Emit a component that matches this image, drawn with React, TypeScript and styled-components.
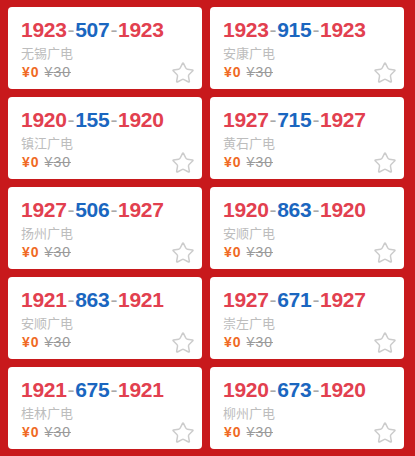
import { createGlobalStyle } from 'styled-components';
import styled from 'styled-components';
import { Star } from 'lucide-react';

export interface INumberData {
  id: string;
  prefix: string;
  middle: string;
  suffix: string;
  city: string;
  price: number;
  originalPrice: number;
}

const numbers: INumberData[] = [
  { id: 'a1', prefix: '1923', middle: '507', suffix: '1923', city: '无锡广电', price: 0, originalPrice: 30 },
  { id: 'a2', prefix: '1923', middle: '915', suffix: '1923', city: '安康广电', price: 0, originalPrice: 30 },
  { id: 'a3', prefix: '1920', middle: '155', suffix: '1920', city: '镇江广电', price: 0, originalPrice: 30 },
  { id: 'a4', prefix: '1927', middle: '715', suffix: '1927', city: '黄石广电', price: 0, originalPrice: 30 },
  { id: 'a5', prefix: '1927', middle: '506', suffix: '1927', city: '扬州广电', price: 0, originalPrice: 30 },
  { id: 'a6', prefix: '1920', middle: '863', suffix: '1920', city: '安顺广电', price: 0, originalPrice: 30 },
  { id: 'a7', prefix: '1921', middle: '863', suffix: '1921', city: '安顺广电', price: 0, originalPrice: 30 },
  { id: 'a8', prefix: '1927', middle: '671', suffix: '1927', city: '崇左广电', price: 0, originalPrice: 30 },
  { id: 'a9', prefix: '1921', middle: '675', suffix: '1921', city: '桂林广电', price: 0, originalPrice: 30 },
  { id: 'a10', prefix: '1920', middle: '673', suffix: '1920', city: '柳州广电', price: 0, originalPrice: 30 },
];

const GlobalStyle = createGlobalStyle`
  * {
    box-sizing: border-box;
  }
  html, body {
    margin: 0;
    padding: 0;
    background-color: #c8191c;
  }
  body {
    font-family: "Liberation Sans", "Noto Sans CJK SC", sans-serif;
  }
`

const NumberGrid = styled.ul`
  display: grid;
  grid-template-columns: 1fr 1fr;
  gap: 8px;
  margin: 0;
  padding: 7px 11px 7px 8px;
  min-height: 100vh;
  background-color: #c8191c;
`

const NumberCard = styled.li`
  display: flex;
  flex-direction: row;
  justify-content: space-between;
  height: 82px;
  padding: 10px 7px 4px 13px;
  list-style: none;
  background-color: #fff;
  border-radius: 4px;
`

const NumberInfo = styled.div`
  display: flex;
  flex-direction: column;
`

const PhoneNumber = styled.div`
  font-size: 21px;
  line-height: 26px;
  font-weight: bold;
  letter-spacing: -0.3px;
  white-space: nowrap;
`

const Segment = styled.span<{ highlight?: boolean }>`
  color: ${props => props.highlight ? '#1a66c0' : '#e2404f'};
`

const Dash = styled.span`
  color: #a9a9a9;
  font-weight: normal;
  margin: 0 1px;
`

const CityName = styled.div`
  margin-top: 2px;
  font-size: 13px;
  line-height: 18px;
  color: #bdbdbd;
`

const PriceRow = styled.div`
  display: flex;
  flex-direction: row;
  align-items: baseline;
  padding-left: 1px;
  font-size: 14px;
  line-height: 18px;
  letter-spacing: 1px;
`

const Price = styled.span`
  color: #f06a24;
  font-weight: bold;
`

const OriginalPrice = styled.span`
  margin-left: 5px;
  color: #9a9a9a;
  text-decoration: line-through;
`

const FavButton = styled.div`
  align-self: flex-end;
  display: flex;
  color: #cccccc;
`

export default function App() {

  return (
    <>
      <GlobalStyle />
      <NumberGrid>
        {numbers.map((item: INumberData) => (
          <NumberCard key={item.id}>
            <NumberInfo>
              <PhoneNumber>
                <Segment>{item.prefix}</Segment>
                <Dash>-</Dash>
                <Segment highlight>{item.middle}</Segment>
                <Dash>-</Dash>
                <Segment>{item.suffix}</Segment>
              </PhoneNumber>
              <CityName>{item.city}</CityName>
              <PriceRow>
                <Price>¥{item.price}</Price>
                <OriginalPrice>¥{item.originalPrice}</OriginalPrice>
              </PriceRow>
            </NumberInfo>
            <FavButton>
              <Star size={24} strokeWidth={1.5} />
            </FavButton>
          </NumberCard>
        ))}
      </NumberGrid>
    </>
  );
}
